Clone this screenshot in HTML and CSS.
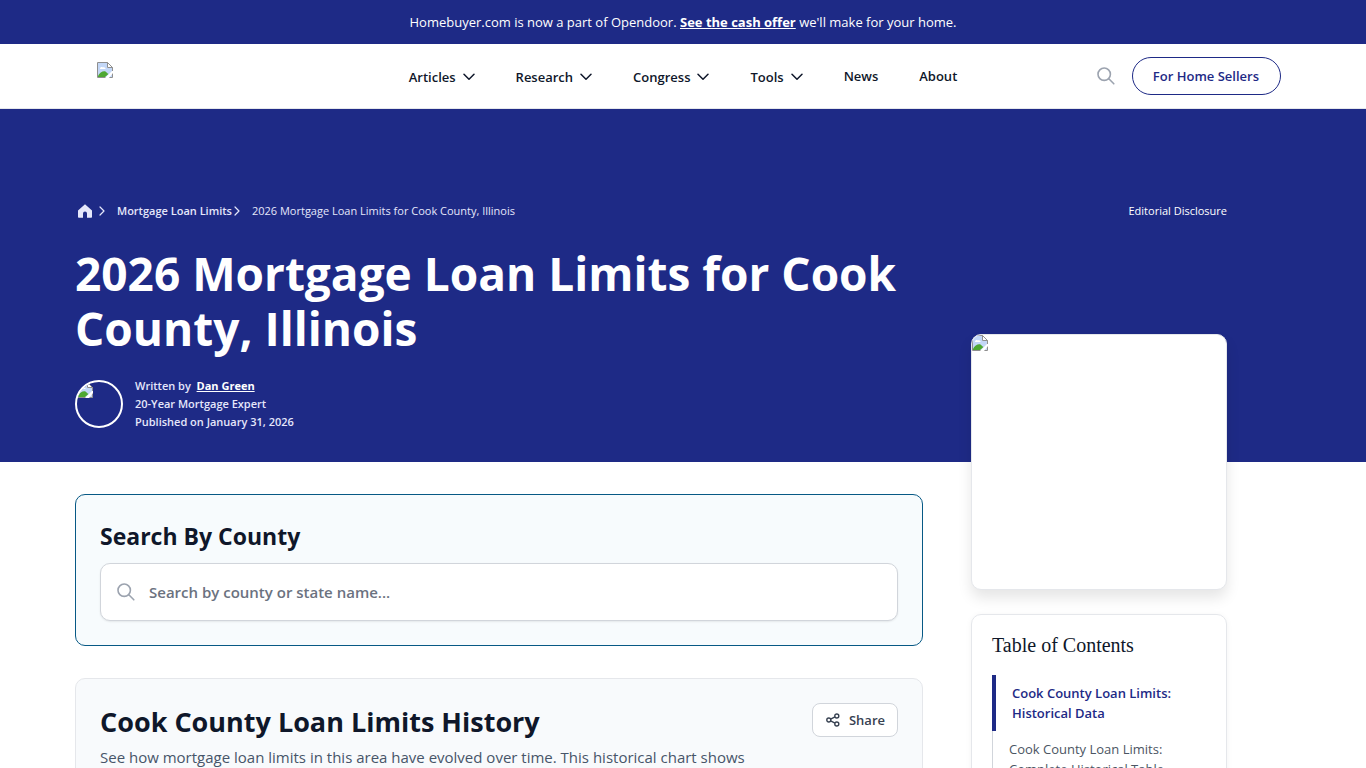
FILE: index.html
```
<!DOCTYPE html>
<html lang="en">
<head>
<meta charset="utf-8">
<meta name="viewport" content="width=device-width, initial-scale=1">
<title>2026 Mortgage Loan Limits for Cook County, Illinois</title>
<link rel="stylesheet" href="styles.css">
</head>
<body>
<svg class="defs" aria-hidden="true">
  <symbol id="missing" viewBox="0 0 16 16">
    <path d="M.5 .5h10l5 5v10H.5z" fill="#fff" stroke="#8f8f8f"/>
    <path d="M1 1h9.500v5H15v9H1z" fill="#c3d7f7"/>
    <path d="M3 7c0-2 2-2.500 2.700-1.500C7.500 4.500 9 6 8.500 7z" fill="#fff"/>
    <path d="M1 15v-1c2-4 7-6.500 9-3l1.500 1L8 15z" fill="#4ea832"/>
    <path d="M8 16l7-7h1v2l-4 5z" fill="#fff"/>
    <path d="M10.500 .5v5h5z" fill="#fff" stroke="#8f8f8f"/>
  </symbol>
  <symbol id="down" viewBox="0 0 12 8"><path d="M1 1.200l5 5 5-5" fill="none" stroke="currentColor" stroke-width="1.500" stroke-linecap="round" stroke-linejoin="round"/></symbol>
  <symbol id="right" viewBox="0 0 6 10"><path d="M1 1l4 4-4 4" fill="none" stroke="currentColor" stroke-width="1.200" stroke-linecap="round" stroke-linejoin="round"/></symbol>
  <symbol id="search" viewBox="0 0 18 18"><circle cx="7.200" cy="7.200" r="6.200" fill="none" stroke="currentColor" stroke-width="1.600"/><path d="M11.800 11.800l5 5" fill="none" stroke="currentColor" stroke-width="1.600" stroke-linecap="round"/></symbol>
</svg>

<div class="banner">Homebuyer.com is now a part of Opendoor. <a href="#">See the cash offer</a> we'll make for your home.</div>

<header class="header">
  <div class="header-inner">
    <a class="logo" href="#" aria-label="Homebuyer.com"><svg class="missing"><use href="#missing"/></svg></a>
    <nav class="nav" aria-label="Main">
      <button type="button">Articles <svg class="down"><use href="#down"/></svg></button>
      <button type="button">Research <svg class="down"><use href="#down"/></svg></button>
      <button type="button">Congress <svg class="down"><use href="#down"/></svg></button>
      <button type="button">Tools <svg class="down"><use href="#down"/></svg></button>
      <a href="#">News</a>
      <a href="#">About</a>
    </nav>
    <div class="actions">
      <button type="button" class="search-button" aria-label="Search"><svg class="search-icon"><use href="#search"/></svg></button>
      <a class="sellers" href="#">For Home Sellers</a>
    </div>
  </div>
</header>

<section class="hero page">
  <div class="container">
    <div class="topline">
      <nav class="crumbs" aria-label="Breadcrumb">
        <a href="#" aria-label="Home" class="home"><svg viewBox="0 0 14 14"><path d="M7 .3L0 6.600V13a.8.8 0 0 0 .8.8H5V9.500a2 2 0 0 1 4 0v4.300h4.200A.8.800 0 0 0 14 13V6.600z" fill="currentColor"/></svg></a>
        <svg class="right"><use href="#right"/></svg>
        <a href="#" class="parent">Mortgage Loan Limits</a>
        <svg class="right second"><use href="#right"/></svg>
        <span>2026 Mortgage Loan Limits for Cook County, Illinois</span>
      </nav>
      <a class="disclosure" href="#">Editorial Disclosure</a>
    </div>
    <h1>2026 Mortgage Loan Limits for Cook County, Illinois</h1>
    <div class="author">
      <div class="avatar"><svg class="missing"><use href="#missing"/></svg></div>
      <div>
        <div>Written by&nbsp; <a href="#">Dan Green</a></div>
        <div>20-Year Mortgage Expert</div>
        <div>Published on January 31, 2026</div>
      </div>
    </div>
  </div>
</section>

<div class="page">
  <div class="container columns">
    <main class="main">
      <section class="card search-card">
        <h2><label for="county">Search By County</label></h2>
        <div class="field">
          <svg class="search-icon"><use href="#search"/></svg>
          <input id="county" type="text" placeholder="Search by county or state name...">
        </div>
      </section>
      <section class="card history">
        <div class="history-text">
          <h2>Cook County Loan Limits History</h2>
          <p>See how mortgage loan limits in this area have evolved over time. This historical chart shows</p>
        </div>
        <button type="button" class="share">
          <svg viewBox="0 0 14 14" fill="none" stroke="currentColor" stroke-width="1.400"><circle cx="2.800" cy="7" r="2"/><circle cx="10.800" cy="3" r="2"/><circle cx="10.800" cy="11" r="2"/><path d="M4.600 6.100L9 3.900M4.600 7.900L9 10.100"/></svg>
          Share
        </button>
      </section>
    </main>
    <aside class="side">
      <div class="picture"><svg class="missing"><use href="#missing"/></svg></div>
      <nav class="toc" aria-labelledby="toc-title">
        <h2 id="toc-title">Table of Contents</h2>
        <a class="current" href="#">Cook County Loan Limits: Historical Data</a>
        <a href="#">Cook County Loan Limits: Complete Historical Table</a>
      </nav>
    </aside>
  </div>
</div>
</body>
</html>
```

FILE: styles.css
```
*, *::before, *::after { box-sizing: border-box; }
body {
  margin: 0;
  height: 100vh;
  overflow: hidden;
  background: #fff;
  color: #0f172a;
  font: 400 16px/24px "Open Sans", "Noto Sans", sans-serif;
}
h1, h2, p { margin: 0; }
a { color: inherit; text-decoration: none; }
button { font: inherit; color: inherit; background: none; border: 0; padding: 0; cursor: pointer; }
svg { display: block; flex: none; }
.defs { position: absolute; width: 0; height: 0; }
.missing { width: 16px; height: 16px; }
.down { width: 12px; height: 8px; }
.right { width: 6px; height: 10px; }
.search-icon { width: 18px; height: 18px; color: #9ca3af; }

.banner {
  background: #1e2a86;
  color: #fff;
  text-align: center;
  font-size: 13px;
  line-height: 20px;
  padding: 12px 16px;
}
.banner a { font-weight: 700; text-decoration: underline; }

.header { border-bottom: 1px solid #e5e7eb; }
.header-inner {
  max-width: 1196px;
  height: 64px;
  margin: 0 auto;
  display: grid;
  grid-template-columns: 1fr auto 1fr;
  align-items: center;
}
.logo { align-self: start; padding: 18px 0 0 12px; justify-self: start; }
.nav { display: flex; gap: 41px; font-size: 13px; font-weight: 600; line-height: 20px; }
.nav button { display: flex; align-items: center; gap: 7px; padding-top: 1px; }
.actions { display: flex; justify-content: flex-end; align-items: center; gap: 17px; }
.sellers {
  border: 1px solid #1e2a86;
  border-radius: 20px;
  color: #1e2a86;
  font-size: 13px;
  font-weight: 600;
  line-height: 20px;
  padding: 8px 21px 8px 20px;
}

.page { padding-right: 64px; }
.container { max-width: 1152px; margin: 0 auto; }
.hero { background: #1e2a86; color: #fff; padding-top: 92px; padding-bottom: 31px; }
.topline { display: flex; justify-content: space-between; font-size: 11px; line-height: 20px; }
.crumbs { display: flex; align-items: center; color: #e5e7fb; padding-left: 3px; }
.home { width: 14px; margin-right: 7px; }
.parent { font-weight: 600; margin-left: 12px; }
.crumbs .second { margin: 0 12px 0 2px; }
h1 { max-width: 848px; margin-top: 25px; font-size: 46px; line-height: 55px; font-weight: 700; }
.author { display: flex; align-items: center; gap: 12px; margin-top: 21px; font-size: 11px; line-height: 18px; font-weight: 600; color: #e5e7fb; }
.author a { color: #fff; font-weight: 700; text-decoration: underline; }
.avatar { width: 48px; height: 48px; border: 2px solid #fff; border-radius: 50%; overflow: hidden; }

.columns {
  display: grid;
  grid-template-columns: minmax(0, 1fr) 256px;
  gap: 48px;
}
.main { padding-top: 32px; display: grid; gap: 32px; align-content: start; }
.card { background: #f8fafc; border: 1px solid #e5e7eb; border-radius: 10px; padding: 24px; }
.search-card { border-color: #075985; background: #f7fbfd; }
.search-card h2 { font-size: 23px; line-height: 34px; margin-bottom: 10px; }
.field {
  display: flex;
  align-items: center;
  gap: 14px;
  height: 58px;
  padding: 0 16px;
  background: #fff;
  border: 1px solid #d1d5db;
  border-radius: 10px;
  box-shadow: 0 1px 2px rgba(0, 0, 0, .08);
}
.field input { flex: 1; min-width: 0; border: 0; outline: 0; padding: 0; background: none; font: 600 15px/24px "Open Sans", sans-serif; }
.field input::placeholder { color: #6b7280; opacity: 1; }
.history { display: flex; justify-content: space-between; align-items: flex-start; gap: 24px; }
.history h2 { font-size: 27px; line-height: 38px; }
.history p { color: #475569; font-size: 15px; line-height: 24px; margin-top: 4px; }
.share {
  display: flex;
  align-items: center;
  gap: 9px;
  height: 34px;
  padding: 0 12px 0 13px;
  background: #fff;
  border: 1px solid #d1d5db;
  border-radius: 8px;
  color: #374151;
  font-size: 13px;
  font-weight: 600;
}
.share svg { width: 14px; height: 14px; }

.side { margin-top: -128px; display: grid; gap: 24px; align-content: start; }
.picture { aspect-ratio: 1; background: #fff; border: 1px solid #e5e7eb; border-radius: 10px; overflow: hidden; box-shadow: 0 8px 14px rgba(0, 0, 0, .1); }
.toc { border: 1px solid #e5e7eb; border-radius: 10px; padding: 16px 20px; font-size: 13px; line-height: 20px; box-shadow: 0 1px 6px rgba(0, 0, 0, .05); }
.toc h2 { font: 400 20px/28px "Liberation Serif", serif; margin-bottom: 16px; }
.toc a { display: block; color: #4b5563; border-left: 1px solid #d1d5db; padding: 8px 16px; }
.toc .current { color: #1e2a86; font-weight: 600; border-left: 4px solid #1e2a86; }
```
